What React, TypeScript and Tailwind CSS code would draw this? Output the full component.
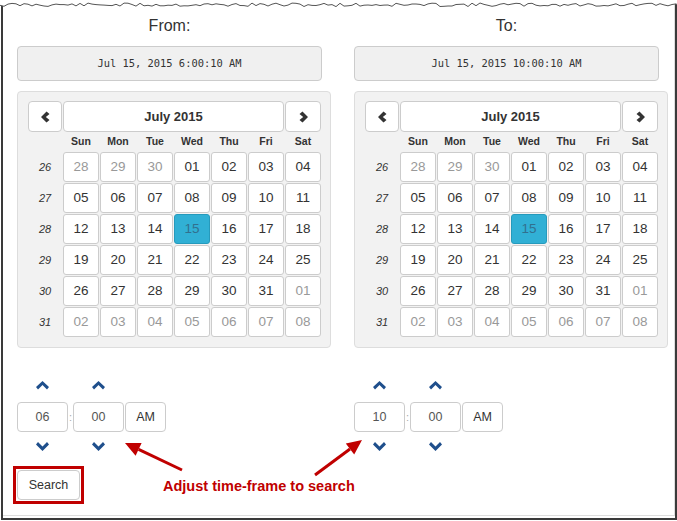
import React from "react";

const weeks = [
  { n: 26, days: ["28", "29", "30", "01", "02", "03", "04"], muted: [0, 1, 2] },
  { n: 27, days: ["05", "06", "07", "08", "09", "10", "11"], muted: [] },
  { n: 28, days: ["12", "13", "14", "15", "16", "17", "18"], muted: [] },
  { n: 29, days: ["19", "20", "21", "22", "23", "24", "25"], muted: [] },
  { n: 30, days: ["26", "27", "28", "29", "30", "31", "01"], muted: [6] },
  { n: 31, days: ["02", "03", "04", "05", "06", "07", "08"], muted: [0, 1, 2, 3, 4, 5, 6] },
];

const dayNames = ["Sun", "Mon", "Tue", "Wed", "Thu", "Fri", "Sat"];

// torn paper edge along the top
const jag = (() => {
  let s = 11;
  const pts: string[] = [];
  for (let x = 0; x <= 680; x += 4) {
    s = (s * 9301 + 49297) % 233280;
    const y = 3 + (s / 233280) * 3.6;
    pts.push(`${x},${y.toFixed(1)}`);
  }
  return pts;
})();

function ChevronUp() {
  return (
    <svg width="13" height="9" viewBox="0 0 13 9">
      <polygon points="0,6 6.5,0 13,6 11,8.5 6.5,4 2,8.5" fill="#1f4f8c" />
    </svg>
  );
}

function ChevronDown() {
  return (
    <svg width="13" height="9" viewBox="0 0 13 9">
      <polygon points="0,2.5 6.5,9 13,2.5 11,0 6.5,4.5 2,0" fill="#1f4f8c" />
    </svg>
  );
}

function Calendar() {
  return (
    <div className="bg-[#f2f2f2] border border-[#dddddd] rounded-[4px] pl-[10px] pr-[9px] pt-[9px] pb-[10px] w-[314px]">
      <div className="grid grid-cols-[34px_repeat(7,36px)] grid-rows-[31px_18px_repeat(6,30px)] gap-[1px]">
        {/* Header */}
        <button className="bg-white border border-[#cccccc] rounded-[4px] flex items-center justify-center">
          <svg width="9" height="12" viewBox="0 0 9 12">
            <polygon points="5.5,0.5 8.5,3 4.8,6 8.5,9 5.5,11.5 0,6" fill="#333" />
          </svg>
        </button>
        <button className="col-span-6 bg-white border border-[#cccccc] rounded-[4px] text-[13px] font-bold text-[#333]">
          July 2015
        </button>
        <button className="bg-white border border-[#cccccc] rounded-[4px] flex items-center justify-center">
          <svg width="9" height="12" viewBox="0 0 9 12">
            <polygon points="3.5,0.5 0.5,3 4.2,6 0.5,9 3.5,11.5 9,6" fill="#333" />
          </svg>
        </button>

        {/* Day names */}
        <div />
        {dayNames.map((d) => (
          <div key={d} className="flex items-center justify-center text-[10.5px] font-bold text-[#333]">
            {d}
          </div>
        ))}

        {/* Weeks */}
        {weeks.map((w) => (
          <React.Fragment key={w.n}>
            <div className="flex items-center justify-center text-[11px] italic text-[#333]">{w.n}</div>
            {w.days.map((d, i) => {
              const sel = w.n === 28 && d === "15";
              const muted = w.muted.includes(i);
              return (
                <div
                  key={i}
                  className={
                    sel
                      ? "flex items-center justify-center rounded-[3px] border border-[#269abc] bg-[#31b0d5] text-[13.5px] text-[#31708f]"
                      : muted
                      ? "flex items-center justify-center rounded-[3px] border border-[#cccccc] bg-white text-[13.5px] text-[#999999]"
                      : "flex items-center justify-center rounded-[3px] border border-[#cccccc] bg-white text-[13.5px] text-[#333]"
                  }
                >
                  {d}
                </div>
              );
            })}
          </React.Fragment>
        ))}
      </div>
    </div>
  );
}

function TimePicker({ hour }: { hour: string }) {
  return (
    <div className="flex items-start mt-[27px]">
      <div className="flex flex-col items-center w-[51px]">
        <div className="h-[20px] flex items-center justify-center">
          <ChevronUp />
        </div>
        <div className="mt-[7px] h-[30px] w-[51px] border border-[#cccccc] rounded-[4px] flex items-center justify-center text-[12.5px] text-[#555]">
          {hour}
        </div>
        <div className="mt-[4px] h-[20px] flex items-center justify-center">
          <ChevronDown />
        </div>
      </div>
      <div className="mt-[27px] h-[30px] w-[5px] flex items-center justify-center text-[11px] text-[#aaa]">:</div>
      <div className="flex flex-col items-center w-[51px]">
        <div className="h-[20px] flex items-center justify-center">
          <ChevronUp />
        </div>
        <div className="mt-[7px] h-[30px] w-[51px] border border-[#cccccc] rounded-[4px] flex items-center justify-center text-[12.5px] text-[#555]">
          00
        </div>
        <div className="mt-[4px] h-[20px] flex items-center justify-center">
          <ChevronDown />
        </div>
      </div>
      <div className="mt-[27px] ml-[1px] h-[30px] w-[41px] border border-[#cccccc] rounded-[4px] bg-white flex items-center justify-center text-[12.5px] text-[#333]">
        AM
      </div>
    </div>
  );
}

function Column({ title, value, hour }: { title: string; value: string; hour: string }) {
  return (
    <div className="w-[314px] flex flex-col">
      <div className="w-[305px] text-center text-[16px] leading-[20px] text-[#333] mt-[16px]">{title}</div>
      <div className="w-[305px] h-[35px] mt-[10px] bg-[#f0f0f0] border border-[#cccccc] rounded-[4px] flex items-center justify-center font-['DejaVu_Sans_Mono',monospace] text-[10.4px] text-[#333]">
        {value}
      </div>
      <div className="mt-[10px]">
        <Calendar />
      </div>
      <TimePicker hour={hour} />
    </div>
  );
}

export default function App() {
  return (
    <div className="relative w-[677px] h-[521px] bg-white font-['Liberation_Sans',Arial,sans-serif]">
      <div className="ml-[1px] w-[676px] h-[520px] border-l-2 border-r-2 border-b-2 border-[#3a3a3a]">
        <div className="w-[672px] h-[516px] border-b border-r border-[#dddddd] pl-[14px]">
          <div className="flex gap-[23px]">
            <Column title="From:" value="Jul 15, 2015 6:00:10 AM" hour="06" />
            <Column title="To:" value="Jul 15, 2015 10:00:10 AM" hour="10" />
          </div>

          <div className="flex items-center mt-[10px]">
            {/* red highlight around the button */}
            <div className="-ml-[4px] border-[3px] border-[#c00000] p-[1px]">
              <button className="block h-[30px] w-[63px] border border-[#cccccc] rounded-[4px] bg-white text-[12.5px] text-[#333]">
                Search
              </button>
            </div>
            <span className="ml-[79px] mt-[3px] text-[14.5px] font-bold text-[#c00000]">
              Adjust time-frame to search
            </span>
          </div>
        </div>
      </div>

      {/* torn top edge */}
      <svg className="absolute top-0 left-0" width="677" height="12" viewBox="0 0 677 12">
        <polygon points={`0,0 680,0 ${[...jag].reverse().join(" ")}`} fill="#ffffff" />
        <polyline points={jag.join(" ")} fill="none" stroke="#555" strokeWidth="1" />
      </svg>

      {/* annotation arrows */}
      <svg className="absolute top-0 left-0 pointer-events-none" width="677" height="521" viewBox="0 0 677 521">
        <line x1="182" y1="470" x2="138.6" y2="449.4" stroke="#c00000" strokeWidth="3" />
        <polygon points="125,443 141.6,443.1 135.6,455.7" fill="#c00000" />
        <line x1="315" y1="475" x2="350" y2="449" stroke="#c00000" strokeWidth="3" />
        <polygon points="362,440 354.2,454.6 345.8,443.4" fill="#c00000" />
      </svg>
    </div>
  );
}
